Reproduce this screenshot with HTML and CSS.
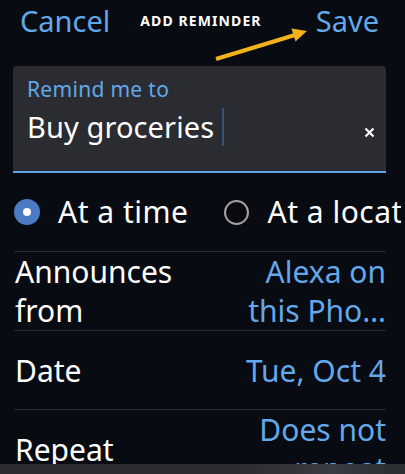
FILE: index.html
```html
<!DOCTYPE html>
<html>
  <head>
    <meta charset="utf-8"/>
    <link rel="stylesheet" href="styles.css">
  </head>
  <body>
    <div class="screen">
      <div class="header">
        <span class="btn-link">Cancel</span>
        <span class="title">ADD REMINDER</span>
        <span class="btn-link save">Save</span>
      </div>

      <svg class="arrow" width="405" height="80" viewBox="0 0 405 80">
        <line x1="216" y1="59" x2="295" y2="35" stroke="#f1b21c" stroke-width="4"/>
        <polygon points="307,31 295.5,41.5 291.5,28.5" fill="#f1b21c"/>
      </svg>

      <div class="field">
        <div class="field-label">Remind me to</div>
        <div class="field-input">
          <span class="field-value">Buy groceries</span>
          <span class="caret"></span>
          <svg class="clear" width="11" height="11" viewBox="0 0 11 11">
            <path d="M1.5 1.5 L9.5 9.5 M9.5 1.5 L1.5 9.5" stroke="#fff" stroke-width="2.2"/>
          </svg>
        </div>
      </div>

      <div class="radios">
        <span class="radio radio-on"></span>
        <span class="radio-text">At a time</span>
        <span class="radio radio-off"></span>
        <span class="radio-text">At a location</span>
      </div>

      <div class="row">
        <div class="row-label">Announces<br>from</div>
        <div class="row-value">Alexa on<br>this Pho…</div>
      </div>
      <div class="row">
        <div class="row-label">Date</div>
        <div class="row-value">Tue, Oct 4</div>
      </div>
      <div class="row">
        <div class="row-label">Repeat</div>
        <div class="row-value">Does not<br>repeat</div>
      </div>

      <div class="bottom-bar"></div>
    </div>
  </body>
</html>
```

FILE: styles.css
```css
html, body {
  margin: 0;
  padding: 0;
  background-color: #080b11;
}
.screen {
  position: relative;
  width: 405px;
  height: 474px;
  overflow: hidden;
  background-color: #080b11;
  font-family: "Noto Sans", sans-serif;
  color: #fff;
}
.header {
  display: flex;
  align-items: center;
  padding: 1px 26px 0 20px;
  height: 40px;
  line-height: 40px;
}
.btn-link {
  font-size: 29px;
  color: #62a8ea;
}
.title {
  margin-left: 30px;
  font-size: 14px;
  font-weight: bold;
  letter-spacing: 1.1px;
}
.save {
  margin-left: auto;
}
.arrow {
  position: absolute;
  left: 0;
  top: 0;
}
.field {
  margin: 25px 19px 0 13px;
  height: 105px;
  padding: 0 14px;
  background-color: #2a2c31;
  border-radius: 4px 4px 0 0;
  border-bottom: 2px solid #5ea3e6;
}
.field-label {
  padding-top: 9px;
  font-size: 21px;
  line-height: 28px;
  letter-spacing: 0.3px;
  color: #62a8ea;
}
.field-input {
  display: flex;
  align-items: center;
  height: 42px;
  margin-top: 3px;
}
.field-value {
  font-size: 29px;
  line-height: 42px;
  letter-spacing: 0.1px;
}
.caret {
  width: 2px;
  height: 38px;
  margin-left: 8px;
  background-color: #34567c;
}
.clear {
  margin-left: auto;
  margin-right: -3px;
  margin-top: 10px;
}
.radios {
  display: flex;
  align-items: center;
  width: 387px;
  height: 78px;
  margin-left: 14px;
  overflow: hidden;
  white-space: nowrap;
}
.radio {
  flex: none;
  box-sizing: border-box;
  border-radius: 50%;
}
.radio-on {
  width: 26px;
  height: 26px;
  border: 9px solid #4a7bc3;
  background-color: #fff;
}
.radio-off {
  width: 25px;
  height: 25px;
  margin-left: 36px;
  border: 2px solid #a3a3a3;
}
.radio-text {
  margin-left: 18px;
  font-size: 30px;
  line-height: 40px;
  letter-spacing: 0.5px;
}
.row {
  display: flex;
  align-items: center;
  justify-content: space-between;
  min-height: 78px;
  margin: 0 19px 0 14px;
  padding-left: 1px;
  border-top: 1px solid #2a2d33;
  font-size: 30px;
  line-height: 39px;
}
.row-value {
  text-align: right;
  color: #62a8ea;
}
.bottom-bar {
  position: absolute;
  left: 0;
  bottom: 0;
  width: 100%;
  height: 10px;
  background: linear-gradient(90deg, #2a2c30 0%, #2b2d31 60%, #393c42 82%, #2c2f34 96%);
}
```
